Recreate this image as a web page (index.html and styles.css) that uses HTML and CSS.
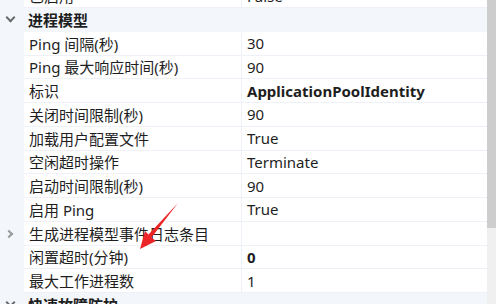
FILE: index.html
```html
<!DOCTYPE html>
<html lang="zh-CN">
<head>
    <meta charset="UTF-8">
    <title>高级设置</title>
    <link rel="stylesheet" href="styles.css">
</head>
<body>
    <div class="window">
        <div class="grid">
            <div class="list">
                <div class="row">
                    <div class="gutter"></div>
                    <div class="name">已启用</div>
                    <div class="value">False</div>
                </div>
                <div class="row cat">
                    <div class="gutter"><span class="chev down"></span></div>
                    <div class="catname">进程模型</div>
                </div>
                <div class="row">
                    <div class="gutter"></div>
                    <div class="name">Ping 间隔(秒)</div>
                    <div class="value">30</div>
                </div>
                <div class="row">
                    <div class="gutter"></div>
                    <div class="name">Ping 最大响应时间(秒)</div>
                    <div class="value">90</div>
                </div>
                <div class="row">
                    <div class="gutter"></div>
                    <div class="name">标识</div>
                    <div class="value bold">ApplicationPoolIdentity</div>
                </div>
                <div class="row">
                    <div class="gutter"></div>
                    <div class="name">关闭时间限制(秒)</div>
                    <div class="value">90</div>
                </div>
                <div class="row">
                    <div class="gutter"></div>
                    <div class="name">加载用户配置文件</div>
                    <div class="value">True</div>
                </div>
                <div class="row">
                    <div class="gutter"></div>
                    <div class="name">空闲超时操作</div>
                    <div class="value">Terminate</div>
                </div>
                <div class="row">
                    <div class="gutter"></div>
                    <div class="name">启动时间限制(秒)</div>
                    <div class="value">90</div>
                </div>
                <div class="row">
                    <div class="gutter"></div>
                    <div class="name">启用 Ping</div>
                    <div class="value">True</div>
                </div>
                <div class="row">
                    <div class="gutter"><span class="chev right"></span></div>
                    <div class="name">生成进程模型事件日志条目</div>
                    <div class="value"></div>
                </div>
                <div class="row">
                    <div class="gutter"></div>
                    <div class="name">闲置超时(分钟)</div>
                    <div class="value bold">0</div>
                </div>
                <div class="row">
                    <div class="gutter"></div>
                    <div class="name">最大工作进程数</div>
                    <div class="value">1</div>
                </div>
                <div class="row cat">
                    <div class="gutter"><span class="chev down"></span></div>
                    <div class="catname">快速故障防护</div>
                </div>
            </div>
        </div>
        <div class="scrollbar">
            <div class="thumb"></div>
        </div>

        <svg class="arrow" width="496" height="304" viewBox="0 0 496 304">
            <polygon points="178,203 151.5,237.5 156,241 140,249 145,231 148.5,234.5" fill="#ec2327"/>
        </svg>
    </div>
</body>
</html>
```

FILE: styles.css
```css
body {
    margin: 0;
    background-color: #fff;
    font-family: "Noto Sans", "Noto Sans CJK SC", sans-serif;
    font-size: 15px;
    color: #1e1e1e;
    overflow: hidden;
}

.window {
    position: relative;
    display: flex;
    width: 496px;
    height: 304px;
    overflow: hidden;
}

.grid {
    width: 487px;
    height: 304px;
    overflow: hidden;
}

.list {
    margin-top: -15.75px;
}

.row {
    display: grid;
    grid-template-columns: 24px 218px 245px;
    height: 23.75px;
}

.gutter {
    background-color: #f3f6fb;
    display: flex;
    align-items: center;
    justify-content: center;
}

.name,
.value {
    display: flex;
    align-items: center;
    box-sizing: border-box;
    border-bottom: 1px solid #eef2f8;
    padding-left: 5px;
    white-space: nowrap;
    overflow: hidden;
}

.name {
    border-right: 1px solid #eef2f8;
}

.bold {
    font-weight: bold;
}

.cat {
    background-color: #f3f6fb;
}

.catname {
    grid-column: 2 / 4;
    display: flex;
    align-items: center;
    padding-left: 4px;
    font-weight: bold;
}

.chev {
    display: block;
    width: 7px;
    height: 7px;
    border-right: 2px solid #6a6a6a;
    border-bottom: 2px solid #6a6a6a;
    box-sizing: border-box;
}

.chev.down {
    transform: translate(-2px, -2px) rotate(45deg);
}

.chev.right {
    width: 6px;
    height: 6px;
    transform: translate(-3px, 0) rotate(-45deg);
    border-color: #9a9a9a;
}

.scrollbar {
    width: 9px;
    height: 304px;
    background-color: #f0f0f0;
}

.thumb {
    height: 228px;
    background-color: #cdcdcd;
}

.arrow {
    position: absolute;
    left: 0;
    top: 0;
    pointer-events: none;
}
```
